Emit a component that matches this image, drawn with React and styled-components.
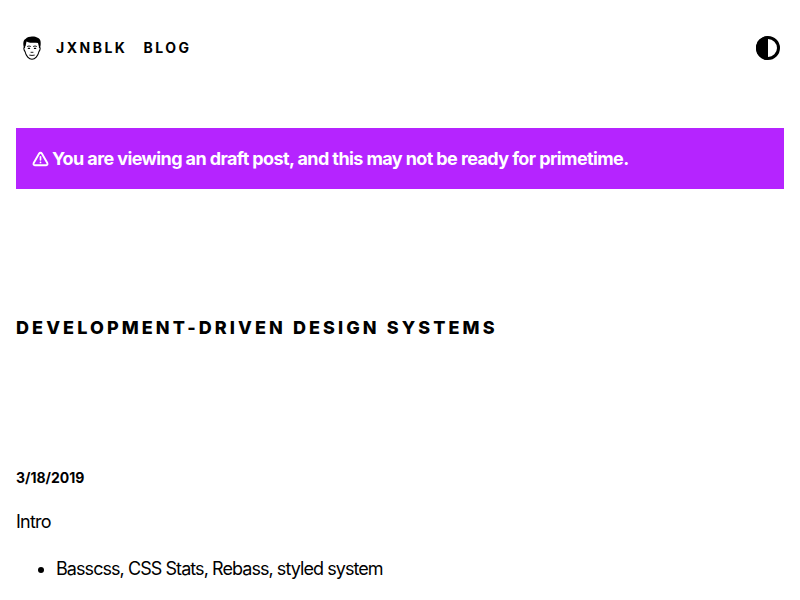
import React from 'react';
import styled, { createGlobalStyle } from 'styled-components';

const Global = createGlobalStyle`
  *, *::before, *::after { box-sizing: border-box; }
  html, body { height: 600px; overflow: hidden; }
  body {
    margin: 0;
    background: #fff;
    color: #000;
    font-family: Inter, "Liberation Sans", sans-serif;
    font-size: 18px;
    line-height: 1.625;
  }
`;
const Header = styled.header`
  display: flex;
  align-items: center;
  height: 96px;
  padding: 0 16px;
`;
const Avatar = styled.svg`
  width: 32px;
  height: 32px;
  display: block;
`;
const NavLink = styled.a`
  color: inherit;
  font-size: 14px;
  font-weight: 700;
  line-height: 20px;
  letter-spacing: 2.5px;
  text-transform: uppercase;
  margin-left: ${(p) => p.$gap}px;
`;
const ModeButton = styled.button`
  margin-left: auto;
  padding: 4px;
  border: 0;
  background: none;
  color: inherit;
  svg { display: block; }
`;
const Banner = styled.div`
  display: flex;
  align-items: center;
  gap: 3px;
  margin: 32px 16px 0;
  padding: 16px;
  height: 61px;
  background: #b524ff;
  color: #fff;
  font-weight: 700;
  letter-spacing: -0.6px;
`;
const Warning = styled.svg`
  width: 17px;
  height: 16px;
  flex: none;
`;
const Title = styled.h1`
  margin: 128px 16px;
  font-size: 18px;
  font-weight: 800;
  line-height: 22px;
  letter-spacing: 3.08px;
  text-transform: uppercase;
`;
const Body = styled.main`
  padding: 0 16px;
`;
const DateLine = styled.div`
  font-size: 14px;
  font-weight: 700;
  line-height: 22px;
`;
const Text = styled.p`
  margin: 18px 0;
  letter-spacing: -0.75px;
`;
const List = styled.ul`
  margin: 18px 0;
  padding-left: 40px;
  letter-spacing: -0.94px;
`;

export default function App() {
  return (
    <>
      <Global />
      <Header>
        <Avatar viewBox="0 0 32 32" fill="none" stroke="#000" strokeLinecap="round">
          <path d="M8 16C6.900 12 7 8 9.500 7C11 5 14 5 16 4.600C19 4.200 24 6 24.500 9C25 12 24.500 14 24 16L23 15L22 11C18 10.500 14 11.500 10.500 9.500L9.600 14Z" fill="#000" stroke="none" />
          <path d="M8.600 15.500C7.600 15 7.600 18 9 19.500C10 24 13 27.300 16 27.300S22 24 23 19.500C24.400 18 24.400 15 23.400 15.500" strokeWidth="1.100" />
          <path d="M11.500 14.300Q13 13.500 14.500 14.300M17.500 14.300Q19 13.500 20.500 14.300" strokeWidth=".9" />
          <path d="M12.300 16.400H13.600M18.400 16.400H19.700" strokeWidth="1.100" />
          <path d="M15 20.300H17M13.700 23.200Q16 23.800 18.300 23.200" strokeWidth=".9" />
        </Avatar>
        <NavLink $gap={8}>Jxnblk</NavLink>
        <NavLink $gap={16}>Blog</NavLink>
        <ModeButton aria-label="Toggle color mode">
          <svg width="24" height="24" viewBox="0 0 32 32" fill="currentColor">
            <circle cx="16" cy="16" r="14" fill="none" stroke="currentColor" strokeWidth="4" />
            <path d="M16 0A16 16 0 0 0 16 32Z" />
          </svg>
        </ModeButton>
      </Header>
      <Banner>
        <Warning viewBox="0 0 17 16" fill="none" stroke="currentColor" strokeLinejoin="round" strokeLinecap="round" aria-label="Warning">
          <path d="M8.500 1.800Q7.600 1.800 7 2.800L1.700 12Q1 14.200 2.800 14.200H14.200Q16 14.200 15.300 12L10 2.800Q9.400 1.800 8.500 1.800Z" strokeWidth="1.900" />
          <path d="M8.500 5.800V8.800M8.500 11.300V11.400" strokeWidth="1.700" />
        </Warning>
        <span>You are viewing an draft post, and this may not be ready for primetime.</span>
      </Banner>
      <Title>Development-Driven Design Systems</Title>
      <Body>
        <DateLine>3/18/2019</DateLine>
        <Text>Intro</Text>
        <List>
          <li>Basscss, CSS Stats, Rebass, styled system</li>
        </List>
      </Body>
    </>
  );
}
